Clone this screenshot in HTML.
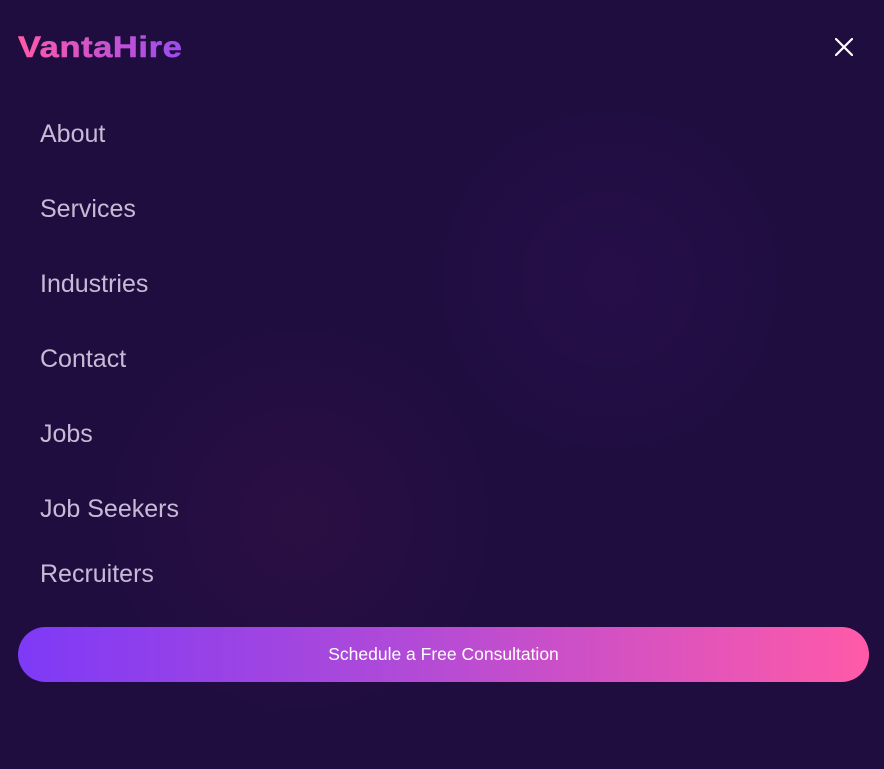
<!DOCTYPE html>
<html><head><meta charset="utf-8"><style>
html,body{margin:0;padding:0;width:884px;height:769px;overflow:hidden;background:#200d40;font-family:"Liberation Sans",sans-serif;}
.bg{position:absolute;inset:0;background:
radial-gradient(circle at 610px 280px,rgba(50,18,90,0.35),transparent 180px),
radial-gradient(circle at 300px 520px,rgba(70,20,75,0.28),transparent 200px),
#200d40;}
.logo{position:absolute;left:18px;top:31px;font-size:30px;font-weight:bold;background:linear-gradient(90deg,#ff5aa8,#9b4cf0);-webkit-background-clip:text;background-clip:text;color:transparent;letter-spacing:0.5px;transform:scaleX(1.15);transform-origin:left top;-webkit-text-stroke:0.6px transparent}
.close{position:absolute;left:835px;top:38px}
.nav{position:absolute;left:40px;font-size:25px;color:#c8bad6}
.btn{position:absolute;left:18px;top:627px;width:851px;height:55px;border-radius:28px;background:linear-gradient(90deg,#7e3af6,#b04ad8 45%,#ff5aa8);color:#fff;font-size:17.5px;display:flex;align-items:center;justify-content:center}
</style></head><body><div class="bg"></div>
<div class="logo">VantaHire</div>
<svg class="close" width="18" height="18" viewBox="0 0 18 18"><path d="M1 1L17 17M17 1L1 17" stroke="#fff" stroke-width="2.2" stroke-linecap="round"/></svg>
<div class="nav" style="top:120px">About</div>
<div class="nav" style="top:195px">Services</div>
<div class="nav" style="top:270px">Industries</div>
<div class="nav" style="top:345px">Contact</div>
<div class="nav" style="top:420px">Jobs</div>
<div class="nav" style="top:495px">Job Seekers</div>
<div class="nav" style="top:560px">Recruiters</div>
<div class="btn">Schedule a Free Consultation</div>
</body></html>
